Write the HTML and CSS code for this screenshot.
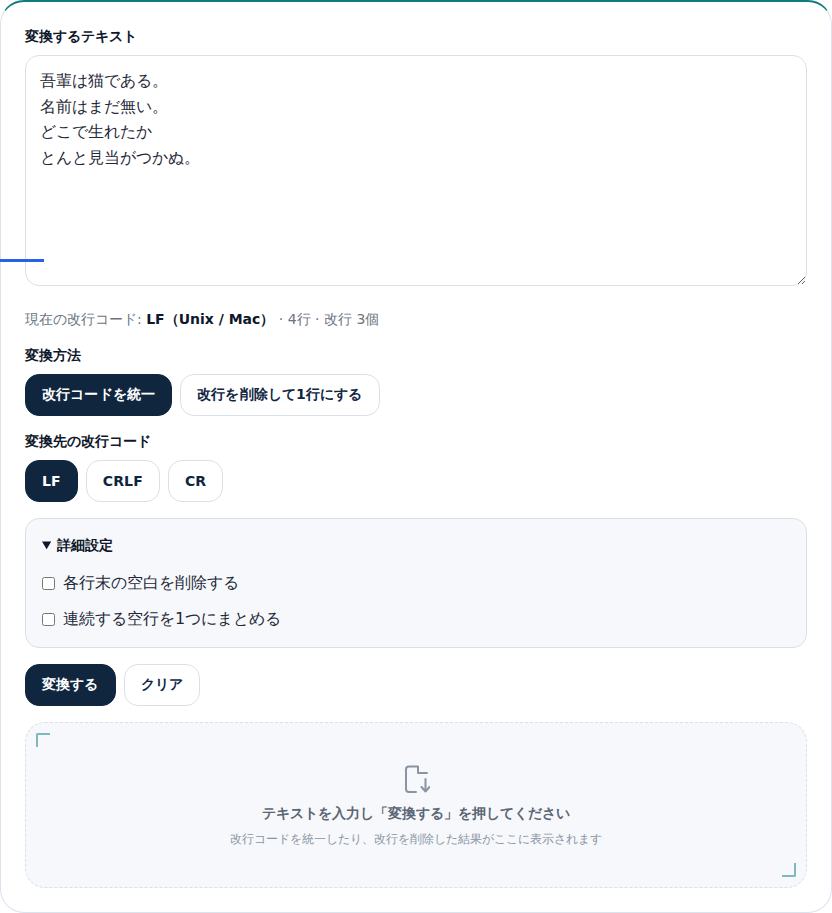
FILE: index.html
```html
<!DOCTYPE html>
<html>
<head>
<meta charset="UTF-8">
<meta name="viewport" content="width=device-width, initial-scale=1.0">
<title>改行コード変換</title>
<link rel="stylesheet" href="styles.css">
</head>
<body>

<div class="card">
    <span class="scan-line"></span>

    <label class="label first" for="source">変換するテキスト</label>
    <textarea class="source" id="source">吾輩は猫である。
名前はまだ無い。
どこで生れたか
とんと見当がつかぬ。</textarea>

    <p class="status">現在の改行コード: <strong>LF（Unix / Mac）</strong> · 4行 · 改行 3個</p>

    <div class="label">変換方法</div>
    <div class="btn-row">
        <button class="btn active">改行コードを統一</button>
        <button class="btn">改行を削除して1行にする</button>
    </div>

    <div class="label">変換先の改行コード</div>
    <div class="btn-row">
        <button class="btn active">LF</button>
        <button class="btn">CRLF</button>
        <button class="btn">CR</button>
    </div>

    <details class="advanced" open>
        <summary>詳細設定</summary>
        <label class="check"><input type="checkbox">各行末の空白を削除する</label>
        <label class="check"><input type="checkbox">連続する空行を1つにまとめる</label>
    </details>

    <div class="btn-row actions">
        <button class="btn active">変換する</button>
        <button class="btn">クリア</button>
    </div>

    <div class="result">
        <span class="corner top-left"></span>
        <span class="corner bottom-right"></span>
        <svg class="result-icon" width="28" height="30" viewBox="0 0 28 30" fill="none" stroke="#8a94a3" stroke-width="2" stroke-linecap="round" stroke-linejoin="round">
            <path d="M14 28H7a3 3 0 0 1-3-3V5.500a3 3 0 0 1 3-3h9V9h9"/>
            <path d="M23.500 15v12.500M19.500 23l4 4.500 4-4.500"/>
        </svg>
        <p class="result-title">テキストを入力し「変換する」を押してください</p>
        <p class="result-sub">改行コードを統一したり、改行を削除した結果がここに表示されます</p>
    </div>
</div>

</body>
</html>
```

FILE: styles.css
```css
* {
    box-sizing: border-box;
}

body {
    margin: 0;
    background-color: #fff;
    color: #0f172a;
    font-family: "DejaVu Sans", sans-serif;
}

.card {
    position: relative;
    height: 913px;
    padding: 25px 24px 24px;
    background-color: #fff;
    border: 1px solid #dbe3ee;
    border-top: 2px solid #0f7c80;
    border-radius: 24px;
}

.scan-line {
    position: absolute;
    left: -1px;
    top: 257px;
    width: 44px;
    height: 3px;
    background-color: #2563eb;
}

.label {
    display: block;
    font-size: 14px;
    font-weight: 700;
    line-height: 18px;
    margin-bottom: 9px;
}

.label.first {
    margin-bottom: 10px;
}

.source {
    display: block;
    width: 100%;
    height: 231px;
    padding: 12px 14px;
    border: 1px solid #d8e1ea;
    border-radius: 14px;
    background-color: #fff;
    color: #1f2937;
    font: 16px/25.6px "DejaVu Sans", sans-serif;
    outline: none;
}

.status {
    margin: 24px 0 18px;
    font-size: 14px;
    line-height: 18px;
    color: #6b7480;
}

.status strong {
    color: #0f172a;
}

.btn-row {
    display: flex;
    gap: 8px;
    margin-bottom: 16px;
    padding-top: 1px;
}

.btn {
    height: 42px;
    padding: 0 16px;
    border: 1px solid #d8e1ea;
    border-radius: 14px;
    background-color: #fff;
    color: #10263f;
    font: 700 14px "DejaVu Sans", sans-serif;
    letter-spacing: 0.14px;
}

.btn.active {
    background-color: #10263f;
    border-color: #10263f;
    color: #fff;
}

.advanced {
    height: 130px;
    padding: 16px;
    background-color: #f6f8fb;
    border: 1px solid #d8e1ea;
    border-radius: 14px;
}

.advanced summary {
    font-size: 14px;
    font-weight: 700;
    line-height: 20px;
    margin-bottom: 10px;
}

.check {
    display: flex;
    align-items: center;
    height: 36px;
    font-size: 16px;
    color: #1f2937;
}

.check input {
    width: 13px;
    height: 13px;
    margin: 0 8px 0 0;
}

.actions {
    margin: 16px 0;
    padding-top: 0;
}

.result {
    position: relative;
    height: 166px;
    padding-top: 41px;
    background-color: #f6f8fb;
    border: 1px dashed #d8e1ea;
    border-radius: 20px;
    text-align: center;
}

.result-icon {
    display: block;
    margin: 0 auto 9px;
}

.result-title {
    margin: 0;
    font-size: 14.1px;
    font-weight: 700;
    line-height: 20px;
    color: #5b6675;
}

.result-sub {
    margin: 7px 0 0;
    font-size: 12px;
    line-height: 18px;
    color: #8a94a3;
}

.corner {
    position: absolute;
    width: 14px;
    height: 14px;
    border: 0 solid #7fb9bf;
}

.corner.top-left {
    top: 10px;
    left: 10px;
    border-top-width: 2px;
    border-left-width: 2px;
    border-top-left-radius: 2px;
}

.corner.bottom-right {
    right: 10px;
    bottom: 10px;
    border-right-width: 2px;
    border-bottom-width: 2px;
    border-bottom-right-radius: 2px;
}
```
